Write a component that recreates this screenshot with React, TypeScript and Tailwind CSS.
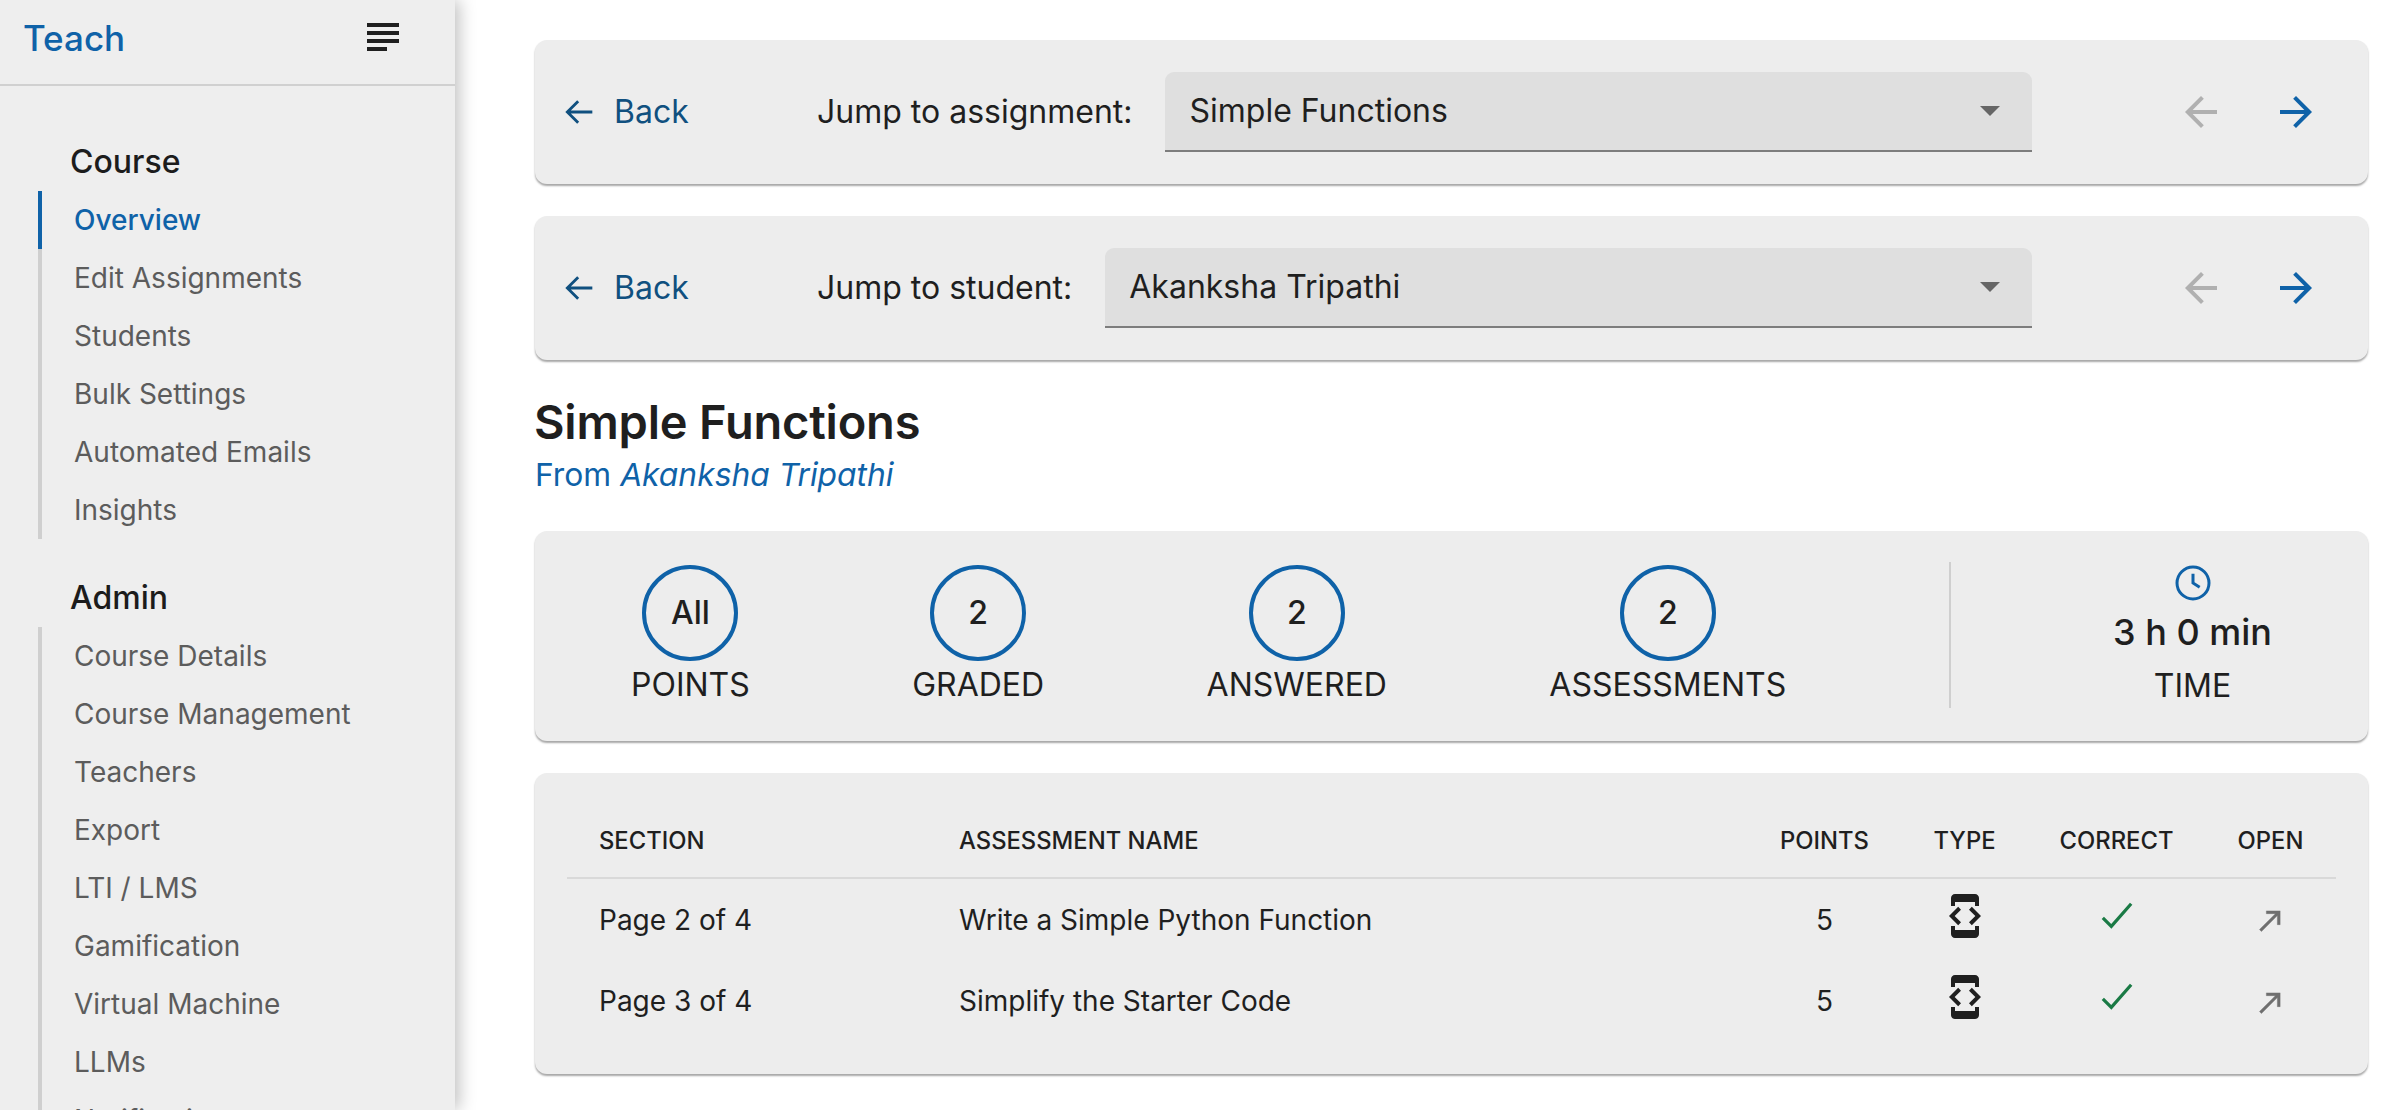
import React from "react";

const BLUE = "#0f62a8";

function NavArrow({ dir, disabled }: { dir: "left" | "right"; disabled?: boolean }) {
  return (
    <svg width="48" height="48" viewBox="0 0 24 24" fill={disabled ? "#b0b0b0" : BLUE}>
      {dir === "left" ? (
        <path d="M20 11H7.83l5.59-5.59L12 4l-8 8 8 8 1.41-1.41L7.83 13H20v-2z" />
      ) : (
        <path d="M12 4l-1.41 1.41L16.17 11H4v2h12.17l-5.58 5.59L12 20l8-8z" />
      )}
    </svg>
  );
}

function DevIcon() {
  return (
    <svg width="48" height="48" viewBox="0 0 24 24" fill="#1f1f1f" className="mx-auto">
      <path d="M7 5h10v2h2V3c0-1.1-.9-1.99-2-1.99L7 1c-1.1 0-2 .9-2 2v4h2V5zm8.41 11.59L20 12l-4.59-4.59L14 8.83 17.17 12 14 15.17l1.41 1.42zM10 15.17 6.83 12 10 8.83 8.59 7.41 4 12l4.59 4.59L10 15.17zM17 19H7v-2H5v4c0 1.1.9 2 2 2h10c1.1 0 2-.9 2-2v-4h-2v2z" />
    </svg>
  );
}

function JumpCard({ label, value }: { label: string; value: string }) {
  return (
    <div className="flex h-[144px] items-center rounded-[12px] bg-[#ededed] pl-[24px] shadow-[0_2px_2px_rgba(0,0,0,0.35)]">
      <div className="flex w-[258px] shrink-0 items-center gap-[15px] text-[#10507f]">
        <svg width="40" height="40" viewBox="0 0 24 24" fill="none" stroke="#10507f" strokeWidth="1.7">
          <path d="M20 12H5M11.5 5.5 5 12l6.5 6.5" />
        </svg>
        <span className="text-[32px] leading-[44px]">Back</span>
      </div>
      <span className="mr-[33px] shrink-0 text-[32px] leading-[44px] text-[#1f1f1f]">{label}</span>
      <div className="flex h-[80px] flex-1 items-center justify-between rounded-t-[9px] border-b-2 border-[#7d7d7d] bg-[#dfdfdf] pl-[24px] pr-[32px]">
        <span className="text-[32px] leading-[44px] text-[#1f1f1f]">{value}</span>
        <svg width="20" height="10" viewBox="0 0 20 10" fill="#666666">
          <path d="M0 0h20L10 10z" />
        </svg>
      </div>
      <div className="ml-[145px] mr-[48px] flex shrink-0 gap-[47px]">
        <NavArrow dir="left" disabled />
        <NavArrow dir="right" />
      </div>
    </div>
  );
}

function Stat({ value, label }: { value: string; label: string }) {
  return (
    <div className="flex flex-col items-center">
      <div className="flex h-[96px] w-[96px] items-center justify-center rounded-full border-[4px] border-[#0f62a8] text-[32px] font-medium text-[#1f1f1f]">
        {value}
      </div>
      <div className="mt-[4px] text-[32px] leading-[40px] text-[#1f1f1f]">{label}</div>
    </div>
  );
}

function NavGroup({ title, items, active, mt }: { title: string; items: string[]; active?: string; mt: string }) {
  return (
    <div className={mt}>
      <div className="pl-[70px] text-[32px] font-medium leading-[44px] text-[#1c1c1c]">{title}</div>
      <ul className="ml-[38px] mt-[7px] border-l-[4px] border-[#cfcfcf]">
        {items.map((it) => (
          <li
            key={it}
            className={
              it === active
                ? "-ml-[4px] flex h-[58px] items-center border-l-[4px] border-[#0f62a8] pl-[32px] text-[28px] font-medium text-[#0f62a8]"
                : "flex h-[58px] items-center pl-[32px] text-[28px] text-[#5c5c5c]"
            }
          >
            {it}
          </li>
        ))}
      </ul>
    </div>
  );
}

function Row({ section, name }: { section: string; name: string }) {
  return (
    <tr className="h-[82px] text-[28px] text-[#1f1f1f]">
      <td className="px-[32px]">{section}</td>
      <td className="px-[32px]">{name}</td>
      <td className="text-center">5</td>
      <td className="text-center">
        <div className="-mt-[8px]"><DevIcon /></div>
      </td>
      <td className="text-center">
        <svg width="34" height="34" viewBox="0 0 36 36" fill="none" stroke="#1a7a45" strokeWidth="3.4" className="mx-auto -mt-[8px]">
          <path d="M3 20l9 9L33 5" />
        </svg>
      </td>
      <td className="text-center">
        <svg width="33" height="33" viewBox="0 0 24 24" fill="#6f6f6f" stroke="#6f6f6f" strokeWidth="0.3" className="mx-auto mt-[2px]">
          <path d="M9 5v2h6.59L4 18.59 5.41 20 17 8.41V15h2V5z" />
        </svg>
      </td>
    </tr>
  );
}

export default function App() {
  return (
    <div className="flex h-[1110px] w-[2408px] overflow-hidden bg-white font-[Inter,sans-serif]">
      <aside className="relative z-10 h-full w-[455px] shrink-0 overflow-hidden bg-[#eeeeee] shadow-[4px_0_16px_rgba(0,0,0,0.25)]">
        <div className="flex h-[86px] items-start justify-between border-b-2 border-[#d0d0d0] pl-[23px] pr-[56px]">
          <span className="mt-[15px] text-[35px] font-medium leading-[46px] text-[#0f62a8]">Teach</span>
          <svg width="32" height="30" viewBox="0 0 32 30" fill="#1f1f1f" className="mt-[23px]">
            <rect width="32" height="4" y="0" />
            <rect width="32" height="4" y="8" />
            <rect width="32" height="4" y="16" />
            <rect width="20" height="4" y="24" />
          </svg>
        </div>
        <NavGroup
          mt="mt-[54px]"
          title="Course"
          active="Overview"
          items={["Overview", "Edit Assignments", "Students", "Bulk Settings", "Automated Emails", "Insights"]}
        />
        <NavGroup
          mt="mt-[37px]"
          title="Admin"
          items={["Course Details", "Course Management", "Teachers", "Export", "LTI / LMS", "Gamification", "Virtual Machine", "LLMs", "Notifications"]}
        />
      </aside>
      <main className="flex min-w-0 flex-1 flex-col pl-[80px] pr-[40px] pt-[40px]">
        <JumpCard label="Jump to assignment:" value="Simple Functions" />
        <div className="mt-[32px]">
          <JumpCard label="Jump to student:" value="Akanksha Tripathi" />
        </div>
        <h1 className="-ml-px mt-[34px] text-[47px] font-semibold leading-[56px] tracking-[-0.2px] text-[#1f1f1f]">Simple Functions</h1>
        <div className="mb-[36px] mt-[5px] text-[31.8px] leading-[40px] text-[#0f62a8]">
          From <em>Akanksha Tripathi</em>
        </div>
        <div className="flex h-[210px] items-center justify-between rounded-[12px] bg-[#ededed] px-[96px] pb-[2px] shadow-[0_2px_2px_rgba(0,0,0,0.35)]">
          <Stat value="All" label="POINTS" />
          <Stat value="2" label="GRADED" />
          <Stat value="2" label="ANSWERED" />
          <Stat value="2" label="ASSESSMENTS" />
          <div className="h-[146px] w-[2px] bg-[#cfcfcf]" />
          <div className="flex flex-col items-center">
            <svg width="40" height="40" viewBox="0 0 24 24" fill="none" stroke="#0f62a8" strokeWidth="1.8" className="-mt-[2px] ml-[2px]">
              <circle cx="12" cy="12" r="9.6" />
              <path d="M12 6.5V12l4 2.6" />
            </svg>
            <div className="mt-[7px] text-[36px] font-medium leading-[44px] text-[#1f1f1f]">3 h 0 min</div>
            <div className="mt-[12px] text-[32px] leading-[40px] text-[#1f1f1f]">TIME</div>
          </div>
        </div>
        <div className="mt-[32px] rounded-[12px] bg-[#ededed] px-[32px] pb-[32px] pt-[32px] shadow-[0_2px_2px_rgba(0,0,0,0.35)]">
          <table className="w-full table-fixed border-collapse">
            <colgroup>
              <col className="w-[360px]" />
              <col className="w-[821px]" />
              <col className="w-[153px]" />
              <col className="w-[127px]" />
              <col className="w-[177px]" />
              <col className="w-[131px]" />
            </colgroup>
            <thead>
              <tr className="h-[73px] border-b-2 border-[#d9d9d9] text-[23.8px] font-medium text-[#1f1f1f]">
                <th className="px-[32px] text-left font-medium">SECTION</th>
                <th className="px-[32px] text-left font-medium">ASSESSMENT NAME</th>
                <th className="text-center font-medium">POINTS</th>
                <th className="text-center font-medium">TYPE</th>
                <th className="text-center font-medium">CORRECT</th>
                <th className="text-center font-medium">OPEN</th>
              </tr>
            </thead>
            <tbody>
              <Row section="Page 2 of 4" name="Write a Simple Python Function" />
              <Row section="Page 3 of 4" name="Simplify the Starter Code" />
            </tbody>
          </table>
        </div>
      </main>
    </div>
  );
}
